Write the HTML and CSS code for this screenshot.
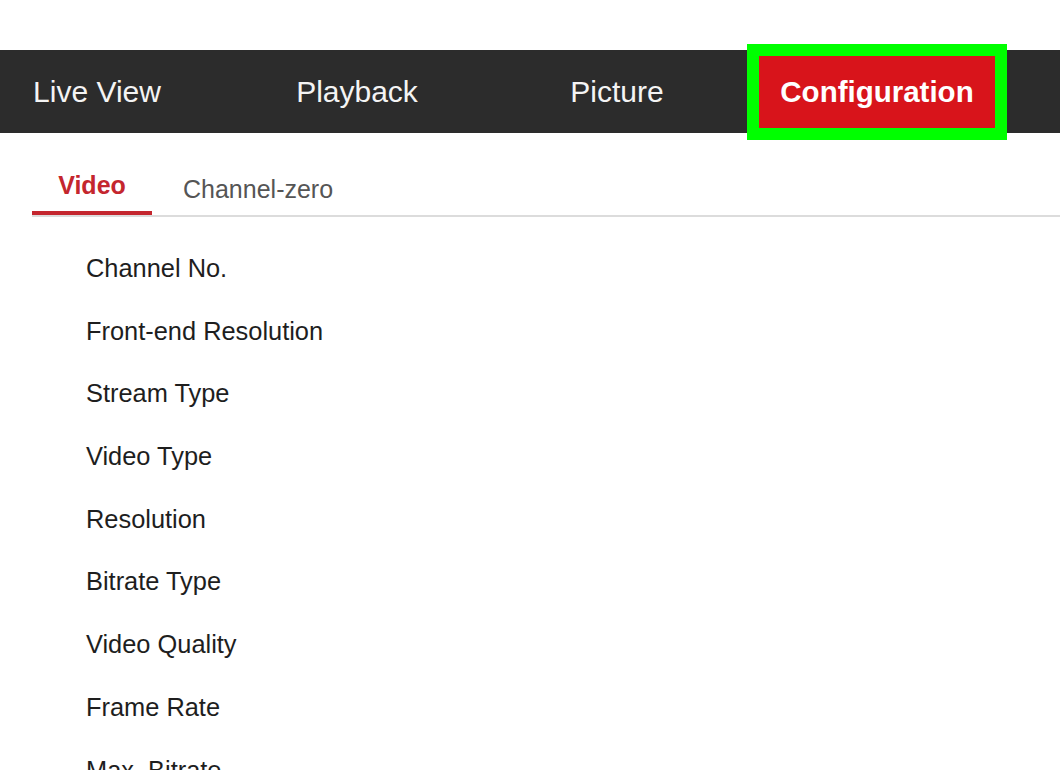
FILE: index.html
```html
<!DOCTYPE html>
<html lang="en">
<head>
    <meta charset="UTF-8">
    <meta name="viewport" content="width=device-width, initial-scale=1.0">
    <title>Configuration - Video</title>
    <link rel="stylesheet" href="styles.css">
</head>
<body>
    <!-- Top menu -->
    <nav class="menu">
        <a class="menu-item">Live View</a>
        <a class="menu-item">Playback</a>
        <a class="menu-item">Picture</a>
        <a class="menu-item active">Configuration</a>
    </nav>

    <div class="content">
        <!-- Sub tabs -->
        <div class="tabs">
            <span class="tab active">Video</span>
            <span class="tab">Channel-zero</span>
        </div>

        <!-- Video settings -->
        <div class="settings">
            <div class="row">Channel No.</div>
            <div class="row">Front-end Resolution</div>
            <div class="row">Stream Type</div>
            <div class="row">Video Type</div>
            <div class="row">Resolution</div>
            <div class="row">Bitrate Type</div>
            <div class="row">Video Quality</div>
            <div class="row">Frame Rate</div>
            <div class="row">Max. Bitrate</div>
        </div>
    </div>
</body>
</html>
```

FILE: styles.css
```css
/* Page */
html, body {
    height: 100%;
    overflow: hidden;
}

body {
    margin: 0;
    font-family: "Liberation Sans", Arial, sans-serif;
    background-color: #fff;
    color: #222;
}

/* Top menu */
.menu {
    margin-top: 50px;
    height: 83px;
    background-color: #2c2c2c;
    display: flex;
    align-items: center;
    gap: 24px;
    margin-left: -21px;
}

.menu-item {
    width: 236px;
    height: 72px;
    line-height: 72px;
    text-align: center;
    color: #f4f4f4;
    font-size: 30px;
    flex-shrink: 0;
}

.menu-item.active {
    background-color: #d8141b;
    font-weight: bold;
    font-size: 29.5px;
    color: #fff;
    outline: 12px solid #00ff00;
}

/* Tabs */
.content {
    padding-left: 32px;
}

.tabs {
    display: flex;
    align-items: flex-end;
    padding-top: 37px;
    border-bottom: 2px solid #dcdcdc;
}

.tab {
    font-size: 25px;
    line-height: 30px;
    padding-bottom: 11px;
    color: #555;
}

.tab.active {
    width: 120px;
    text-align: center;
    font-weight: bold;
    color: #c4262e;
    border-bottom: 4px solid #c4262e;
}

.tab + .tab {
    padding-left: 31px;
}

/* Settings list */
.settings {
    padding-top: 20px;
    padding-left: 54px;
}

.row {
    height: 62.7px;
    line-height: 62.7px;
    font-size: 25.4px;
    color: #1e1e1e;
}
```
